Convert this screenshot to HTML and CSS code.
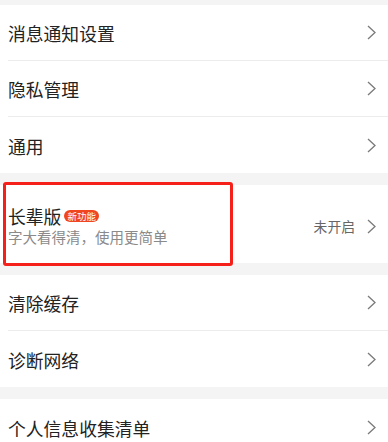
FILE: index.html
```html
<!DOCTYPE html>
<html lang="zh-CN">
<head>
<meta charset="utf-8">
<link rel="stylesheet" href="styles.css">
</head>
<body>
<div class="page">
  <div class="group first">
    <div class="row"><div class="inner"><span class="label">消息通知设置</span><svg class="chev" viewBox="0 0 9 15"><polyline points="1,1 8,7.5 1,14"/></svg></div></div>
    <div class="row"><div class="inner"><span class="label">隐私管理</span><svg class="chev" viewBox="0 0 9 15"><polyline points="1,1 8,7.5 1,14"/></svg></div></div>
    <div class="row"><div class="inner last"><span class="label">通用</span><svg class="chev" viewBox="0 0 9 15"><polyline points="1,1 8,7.5 1,14"/></svg></div></div>
  </div>
  <div class="group card-group">
    <div class="card">
      <div class="card-text">
        <div class="card-title"><span class="label">长辈版</span><span class="badge">新功能</span></div>
        <div class="card-sub">字大看得清，使用更简单</div>
      </div>
      <div class="card-right"><span class="status">未开启</span><svg class="chev" viewBox="0 0 9 15"><polyline points="1,1 8,7.5 1,14"/></svg></div>
      <div class="highlight"></div>
    </div>
  </div>
  <div class="group">
    <div class="row"><div class="inner"><span class="label">清除缓存</span><svg class="chev" viewBox="0 0 9 15"><polyline points="1,1 8,7.5 1,14"/></svg></div></div>
    <div class="row"><div class="inner last"><span class="label">诊断网络</span><svg class="chev" viewBox="0 0 9 15"><polyline points="1,1 8,7.5 1,14"/></svg></div></div>
  </div>
  <div class="group">
    <div class="row"><div class="inner last"><span class="label">个人信息收集清单</span><svg class="chev" viewBox="0 0 9 15"><polyline points="1,1 8,7.5 1,14"/></svg></div></div>
  </div>
</div>
</body>
</html>
```
FILE: styles.css
```css
* { box-sizing: border-box; }
html, body {
  margin: 0;
  padding: 0;
  background: #f4f4f4;
  font-family: "Noto Sans CJK SC", "Noto Sans", sans-serif;
}
.page {
  width: 388px;
  height: 442px;
  overflow: hidden;
  padding-top: 5px;
  display: flex;
  flex-direction: column;
  gap: 12px;
}
.group {
  background: #fff;
  flex-shrink: 0;
}
.row {
  height: 56px;
  padding-left: 8px;
}
.inner {
  height: 56px;
  display: flex;
  align-items: center;
  justify-content: space-between;
  padding-right: 12px;
  border-bottom: 1px solid #ececec;
}
.inner.last { border-bottom: none; }
.label {
  font-size: 17.8px;
  line-height: 22px;
  color: #222;
  padding-top: 1px;
}
.chev {
  width: 9px;
  height: 15px;
  fill: none;
  stroke: #7a7a7a;
  stroke-width: 1.3;
  flex-shrink: 0;
}
.card {
  position: relative;
  height: 78px;
  padding-left: 8px;
  padding-right: 12px;
  display: flex;
  align-items: center;
  justify-content: space-between;
}
.card-text {
  display: flex;
  flex-direction: column;
  gap: 2px;
  padding-top: 2px;
}
.card-title {
  display: flex;
  align-items: center;
  height: 22px;
}
.badge {
  margin-left: 3px;
  width: 35px;
  height: 12px;
  border-radius: 6px;
  background: #f0461f;
  color: #fff;
  font-size: 9.5px;
  line-height: 12px;
  text-align: center;
  margin-top: 1px;
}
.card-sub {
  font-size: 14.5px;
  line-height: 18px;
  color: #8a8a8a;
}
.card-right {
  display: flex;
  align-items: center;
  gap: 12px;
  padding-top: 4px;
}
.status {
  font-size: 13.8px;
  color: #666;
}
.highlight {
  position: absolute;
  left: 3px;
  top: -3px;
  width: 230px;
  height: 84px;
  border: 3px solid #f5201a;
  border-radius: 3px;
}
```
